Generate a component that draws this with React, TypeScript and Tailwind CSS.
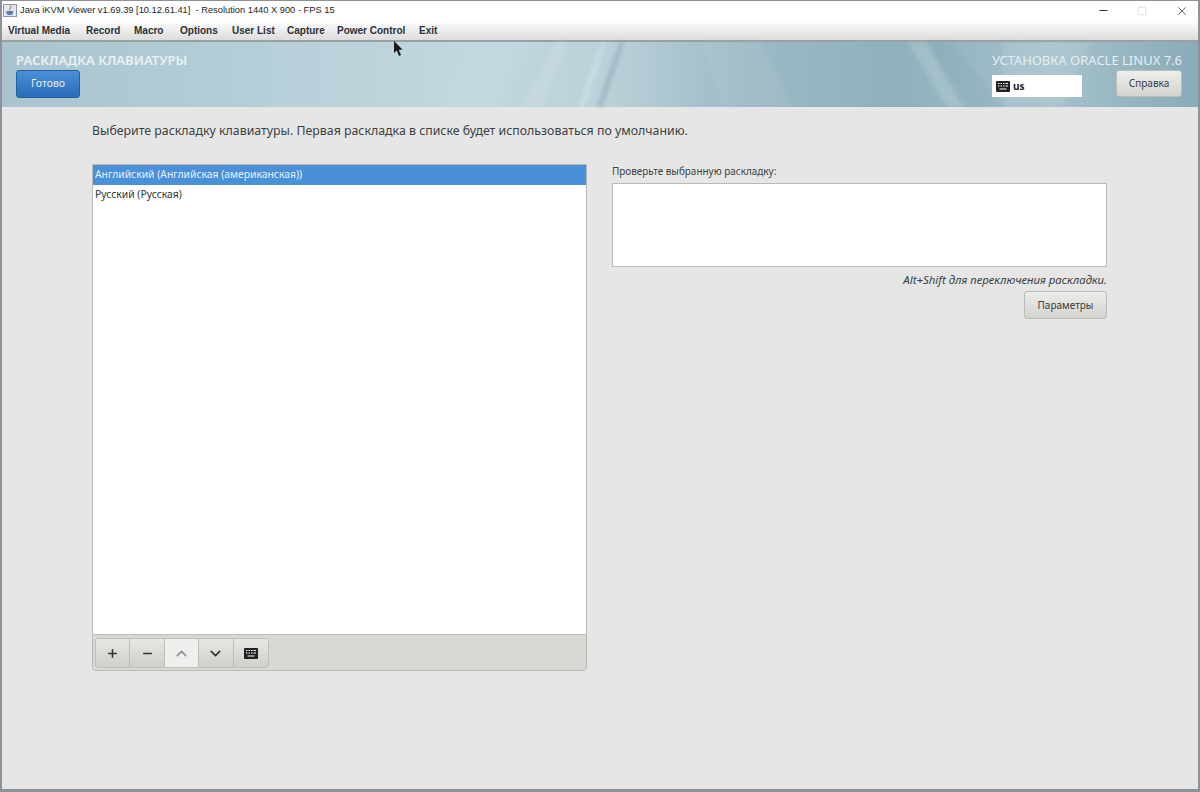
import { Minus, Square, X, Plus, ChevronUp, ChevronDown } from 'lucide-react';

const menuItems = [
  { label: 'Virtual Media', width: 'w-[78px]' },
  { label: 'Record', width: 'w-[48px]' },
  { label: 'Macro', width: 'w-[46px]' },
  { label: 'Options', width: 'w-[52px]' },
  { label: 'User List', width: 'w-[55px]' },
  { label: 'Capture', width: 'w-[50px]' },
  { label: 'Power Control', width: 'w-[82px]' },
  { label: 'Exit', width: 'w-[30px]' },
];

const KbdIcon = ({ className }: { className: string }) => (
  <svg viewBox="0 0 14 11" className={className}>
    <rect x="0" y="0" width="14" height="11" rx="1" fill="#222" />
    <path d="M2 2.5h1.5M4.5 2.5H6M7 2.5h1.5M9.5 2.5H12M2 5h1.5M4.5 5H6M7 5h1.5M9.5 5H12M3.5 8h7" stroke="#fff" strokeWidth="1.1" />
  </svg>
);

const JavaIcon = () => (
  <svg viewBox="0 0 14 13" className="w-[14px] h-[13px]">
    <rect x="0.5" y="0.5" width="13" height="12" fill="#dfe6f0" stroke="#8b98ab" />
    <path d="M7.5 1.5 C9 3.5 5.5 4.5 7 6.5 C6 4.5 9.5 4 7.5 1.5 Z" fill="#d2622a" stroke="#d2622a" strokeWidth="0.5" />
    <path d="M3.5 7 H10 V9 C10 10.5 8.5 11 6.8 11 C5 11 3.5 10.5 3.5 9 Z" fill="#5a7fae" />
  </svg>
);

const HeaderStreaks = () => (
  <svg viewBox="0 0 1196 66" preserveAspectRatio="none" className="absolute inset-0 w-full h-full blur-[2px]">
    <polygon points="470,0 530,0 500,66 440,66" fill="#d6e4ea" opacity="0.14" />
    <polygon points="555,0 566,0 540,66 520,66" fill="#d8e6eb" opacity="0.3" />
    <polygon points="600,0 604,0 582,66 576,66" fill="#eaf2f5" opacity="0.35" />
    <polygon points="618,0 622,0 600,66 595,66" fill="#5f8594" opacity="0.35" />
    <polygon points="700,0 760,0 790,66 720,66" fill="#cfe0e6" opacity="0.12" />
    <polygon points="905,0 925,0 960,66 945,66" fill="#d3e2e8" opacity="0.25" />
    <polygon points="925,0 950,0 1000,66 965,66" fill="#5f8594" opacity="0.1" />
    <polygon points="1000,0 1090,0 1060,66 1000,66" fill="#cfe0e6" opacity="0.2" />
  </svg>
);

const ToolButton = ({ children, light }: { children: React.ReactNode; light?: boolean }) => (
  <div className={`w-[34.4px] h-[28px] flex items-center justify-center border-r border-[#bdbdb8] last:border-r-0 ${light ? 'bg-[#efefed]' : 'bg-gradient-to-b from-[#e6e6e3] to-[#d0d0cb]'}`}>
    {children}
  </div>
);

export default function App() {
  return (
    <div className="w-[1200px] h-[792px] overflow-hidden flex flex-col bg-[#e6e6e6] border border-l-2 border-[#8d9297] border-b-[3px] border-r-2 font-['Noto_Sans',sans-serif] relative">
      {/* java window chrome */}
      <div className="h-[19px] bg-white flex items-center pl-[1px] shrink-0">
        <JavaIcon />
        <span className="ml-[3px] text-[9.3px] text-[#222] font-['Liberation_Sans',sans-serif] whitespace-pre">Java iKVM Viewer v1.69.39 [10.12.61.41]  - Resolution 1440 X 900 - FPS 15</span>
        <div className="ml-auto flex items-center text-[#333]">
          <Minus className="w-[13px] h-[13px] mr-[27px]" strokeWidth={1.8} />
          <Square className="w-[10px] h-[10px] mr-[28px] text-[#c4c4c4]" strokeWidth={1.2} />
          <X className="w-[14px] h-[14px] mr-[9px]" strokeWidth={1.3} />
        </div>
      </div>
      <div className="h-[20px] bg-gradient-to-b from-white to-[#dcdcdc] border-b-2 border-[#9a9fa3] flex items-center pl-[6px] shrink-0 box-content">
        {menuItems.map((item) => (
          <span key={item.label} className={`${item.width} text-[10px] font-bold text-[#2b2f38] font-['Liberation_Sans',sans-serif] whitespace-nowrap`}>
            {item.label}
          </span>
        ))}
      </div>

      {/* installer header */}
      <div className="relative h-[65px] shrink-0 bg-[linear-gradient(90deg,#a9c4ce_0%,#b4ced7_20%,#c2d7df_38%,#bcd2da_50%,#9dbac5_62%,#8fb0bc_75%,#a5c1cb_88%,#8aabb8_100%)] flex justify-between pl-[14px] pr-[16px]">
        <HeaderStreaks />
        <div className="relative flex flex-col pt-[9px]">
          <span className="text-[13.1px] leading-[18px] font-semibold text-[#e9f1f4]">РАСКЛАДКА КЛАВИАТУРЫ</span>
          <div className="mt-[1px] w-[64px] h-[28px] rounded-[3px] bg-gradient-to-b from-[#4a90d9] to-[#2a6cb8] border border-[#22609f] flex items-center justify-center text-[10.5px] text-[#e6eef6]">Готово</div>
        </div>
        <div className="relative flex flex-col items-end pt-[9px]">
          <span className="text-[13px] leading-[18px] text-[#e4eef2] whitespace-nowrap">УСТАНОВКА ORACLE LINUX 7.6</span>
          <div className="flex items-center mt-[1px]">
            <div className="-mt-[1px] self-end w-[90px] h-[22px] bg-white flex items-center pl-[4px] mr-[34px]">
              <KbdIcon className="w-[14px] h-[11px]" />
              <span className="ml-[3px] text-[10px] font-bold text-[#222]">us</span>
            </div>
            <div className="w-[66px] h-[27px] rounded-[3px] bg-gradient-to-b from-[#eeeeec] to-[#d3d3cf] border border-[#b9bdbb] flex items-center justify-center text-[10px] text-[#3a3e40]">Справка</div>
          </div>
        </div>
      </div>

      {/* spoke body */}
      <div className="flex-1 pl-[90px]">
        <p className="mt-[15px] text-[12.35px] leading-[18px] text-[#3b3f41] whitespace-nowrap">Выберите раскладку клавиатуры. Первая раскладка в списке будет использоваться по умолчанию.</p>
        <div className="mt-[24px] flex gap-[25px]">
          <div className="w-[495px] h-[507px] flex flex-col border border-[#b9b9b6] rounded-b-[4px] overflow-hidden">
            <div className="flex-1 bg-white text-[10.35px]">
              <div className="h-[20px] bg-[#4a90d9] text-[#e8f0f8] flex items-center pl-[2px] pb-[1px]">Английский (Английская (американская))</div>
              <div className="h-[19px] text-[#2e3436] flex items-center pl-[2px]">Русский (Русская)</div>
            </div>
            <div className="h-[36px] bg-[#d8d8d4] border-t border-[#bdbdb9] pl-[2px] pt-[3px] shrink-0">
              <div className="inline-flex rounded-[3px] border border-[#c0c0bb] overflow-hidden">
                <ToolButton><Plus className="w-[13px] h-[13px] text-[#2e3436]" strokeWidth={2.8} /></ToolButton>
                <ToolButton><Minus className="w-[13px] h-[13px] text-[#2e3436]" strokeWidth={2.8} /></ToolButton>
                <ToolButton light><ChevronUp className="w-[17px] h-[17px] text-[#8b8f90]" strokeWidth={2.2} /></ToolButton>
                <ToolButton><ChevronDown className="w-[17px] h-[17px] text-[#2e3436]" strokeWidth={2.2} /></ToolButton>
                <ToolButton><KbdIcon className="w-[14px] h-[11px]" /></ToolButton>
              </div>
            </div>
          </div>
          <div className="w-[495px] flex flex-col">
            <span className="text-[9.95px] leading-[14px] text-[#3b3f41]">Проверьте выбранную раскладку:</span>
            <div className="mt-[5px] h-[84px] bg-white border border-[#b9b9b6]" />
            <span className="mt-[5px] text-right text-[11.4px] leading-[15px] italic text-[#3b3f41]">Alt+Shift для переключения раскладки.</span>
            <div className="mt-[4px] self-end w-[83px] h-[28px] rounded-[3px] bg-gradient-to-b from-[#ecece9] to-[#d3d3cf] border border-[#b9bdbb] flex items-center justify-center text-[10px] text-[#3a3e40]">Параметры</div>
          </div>
        </div>
      </div>

      {/* mouse pointer captured in the shot */}
      <svg viewBox="0 0 10 16" className="absolute left-[391px] top-[40px] w-[10px] h-[16px]">
        <path d="M1 0 L1 12 L3.8 9.6 L6 15 L8 14 L5.8 9 L9.5 8.6 Z" fill="#1a1a1a" />
      </svg>
    </div>
  );
}
